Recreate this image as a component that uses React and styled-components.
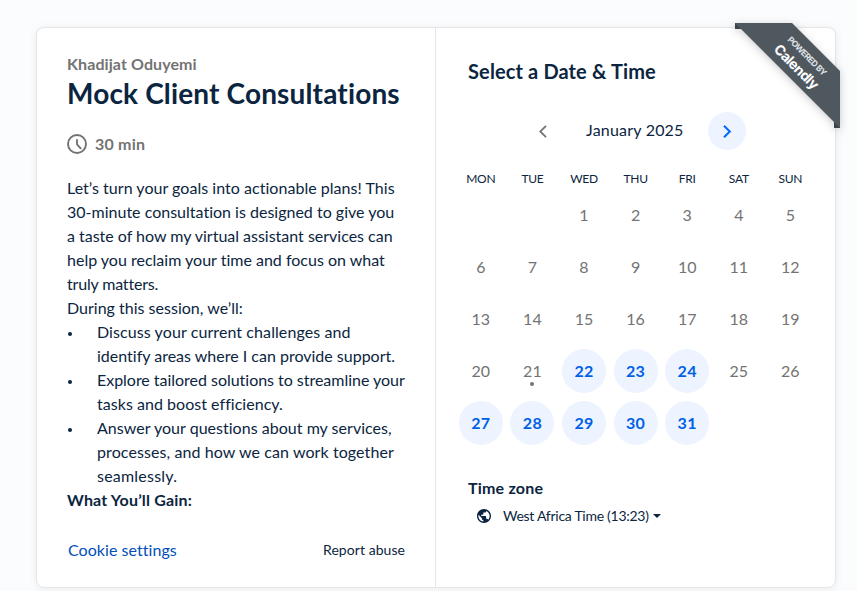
import React from 'react';
import styled, { createGlobalStyle } from 'styled-components';

const GlobalStyle = createGlobalStyle`
  *, *::before, *::after { box-sizing: border-box; }
  body {
    margin: 0;
    height: 591px;
    overflow: hidden;
    background: #fbfcfe;
    color: #0b2540;
    font-family: Lato, "Liberation Sans", sans-serif;
    font-size: 16px;
    line-height: 24px;
    font-variant-ligatures: none;
  }
  h1, h2, h3, p, ul { margin: 0; padding: 0; }
  button { font: inherit; color: inherit; border: 0; padding: 0; background: none; }
`;

const Page = styled.main`
  padding: 27px 21px 0 36px;
  height: 591px;
`;

const Card = styled.section`
  position: relative;
  display: grid;
  grid-template-columns: 399px 1fr;
  height: 561px;
  background: #fff;
  border: 1px solid #e4e6e8;
  border-radius: 8px;
  box-shadow: 0 1px 8px rgba(0, 0, 0, 0.07);
`;

const Details = styled.div`
  display: flex;
  flex-direction: column;
  padding: 24px 30px 25px;
  border-right: 1px solid #e4e6e8;
`;

const Host = styled.h3`
  font-size: 16px;
  line-height: 24px;
  font-weight: 700;
  letter-spacing: 0.09px;
  color: #737373;
`;

const Title = styled.h1`
  margin-top: -1px;
  font-size: 28px;
  line-height: 36px;
  font-weight: 700;
  letter-spacing: 0.15px;
  white-space: nowrap;
`;

const Duration = styled.div`
  display: flex;
  align-items: center;
  gap: 8px;
  margin-top: 21px;
  height: 24px;
  font-weight: 700;
  letter-spacing: 0.2px;
  color: #737373;
`;

const Description = styled.div`
  margin-top: 20px;
  flex: 1;
`;

const Line = styled.span`
  display: block;
  white-space: nowrap;
  letter-spacing: ${(p) => p.$track || 0}px;
`;

const Bullets = styled.ul`
  list-style: none;
`;

const Bullet = styled.li`
  display: grid;
  grid-template-columns: 30px 1fr;
  &::before {
    content: "";
    width: 4px;
    height: 4px;
    margin: 12px 0 0 1px;
    border-radius: 50%;
    background: #0b2540;
  }
`;

const Gain = styled.p`
  font-weight: 700;
  letter-spacing: 0.18px;
`;

const FooterLinks = styled.div`
  display: flex;
  justify-content: space-between;
  align-items: center;
  padding-left: 1px;
  height: 24px;
`;

const CookieLink = styled.button`
  color: #004eba;
  letter-spacing: 0.05px;
`;

const ReportLink = styled.button`
  font-size: 14px;
  letter-spacing: 0.06px;
`;

const Scheduler = styled.div`
  display: flex;
  flex-direction: column;
  padding: 29px 19px 0;
`;

const Heading = styled.h2`
  padding-left: 13px;
  font-size: 20px;
  line-height: 28px;
  font-weight: 700;
  letter-spacing: 0.13px;
`;

const MonthNav = styled.div`
  display: grid;
  grid-template-columns: 38px 98px 38px;
  column-gap: 24px;
  align-items: center;
  justify-content: center;
  height: 38px;
  margin: 27px 1px 0 0;
`;

const Month = styled.div`
  padding-bottom: 2px;
  white-space: nowrap;
  letter-spacing: 0.2px;
`;

const NavButton = styled.button`
  display: grid;
  place-items: center;
  width: 38px;
  height: 38px;
  border-radius: 50%;
  color: ${(p) => (p.$active ? '#0069ff' : '#737373')};
  background: ${(p) => (p.$active ? '#edf4ff' : 'transparent')};
`;

const Weekdays = styled.div`
  display: grid;
  grid-template-columns: repeat(7, 51.6px);
  margin-top: 20px;
  height: 18px;
  font-size: 12px;
  line-height: 18px;
  text-align: center;
  letter-spacing: -0.3px;
`;

const Days = styled.div`
  display: grid;
  grid-template-columns: repeat(7, 51.6px);
  grid-auto-rows: 52px;
  margin-top: 1px;
  place-items: center;
`;

const Day = styled.div`
  position: relative;
  display: grid;
  place-items: center;
  width: 44px;
  height: 44px;
  border-radius: 50%;
  grid-column-start: ${(p) => p.$column || 'auto'};
  color: ${(p) => (p.$open ? '#0060e6' : '#737373')};
  background: ${(p) => (p.$open ? '#edf4ff' : 'transparent')};
  font-weight: ${(p) => (p.$open ? 700 : 400)};
  letter-spacing: ${(p) => (p.$open ? 0.3 : 0)}px;
`;

const TodayDot = styled.span`
  position: absolute;
  left: 20px;
  bottom: 7px;
  width: 4px;
  height: 4px;
  border-radius: 50%;
  background: #737373;
`;

const ZoneTitle = styled.h3`
  margin-top: 27px;
  padding-left: 13px;
  font-size: 16px;
  line-height: 24px;
  letter-spacing: 0.2px;
`;

const Zone = styled.button`
  display: flex;
  align-items: center;
  height: 24px;
  margin-top: 4px;
  padding-left: 21px;
  font-size: 14px;
  white-space: nowrap;
`;

const ZoneName = styled.span`
  margin: 0 4px 0 11px;
  letter-spacing: -0.27px;
`;

const Ribbon = styled.a`
  position: absolute;
  top: -5px;
  right: -5px;
  width: 105px;
  height: 105px;
  color: #fff;
`;

const RibbonShape = styled.svg`
  display: block;
  overflow: visible;
  filter: drop-shadow(0 2px 4px rgba(0, 0, 0, 0.2));
`;

const RibbonLabel = styled.span`
  position: absolute;
  top: 38.5px;
  left: 66px;
  display: flex;
  flex-direction: column;
  align-items: center;
  transform: translate(-50%, -50%) rotate(45deg);
  white-space: nowrap;
  font-family: Inter, sans-serif;
`;

const PoweredBy = styled.small`
  font-size: 8.5px;
  line-height: 12px;
  font-weight: 700;
  color: #dfe1e3;
  letter-spacing: -0.6px;
`;

const Brand = styled.strong`
  font-size: 14px;
  line-height: 17px;
  font-weight: 700;
  letter-spacing: -0.55px;
`;

const DAYS = Array.from({ length: 31 }, (_, i) => i + 1);
const OPEN = new Set([22, 23, 24, 27, 28, 29, 30, 31]);

const TASKS = [
  [['Discuss your current challenges and', 0.09], ['identify areas where I can provide support.', 0]],
  [['Explore tailored solutions to streamline your', -0.025], ['tasks and boost efficiency.', 0.034]],
  [
    ['Answer your questions about my services,', 0.025],
    ['processes, and how we can work together', 0.09],
    ['seamlessly.', 0.22],
  ],
];

const INTRO = [
  ['Let’s turn your goals into actionable plans! This', 0.035],
  ['30-minute consultation is designed to give you', 0.005],
  ['a taste of how my virtual assistant services can', -0.01],
  ['help you reclaim your time and focus on what', 0.005],
  ['truly matters.', -0.17],
  ['During this session, we’ll:', 0.01],
];

const renderLines = (lines) => lines.map(([text, track]) => <Line key={text} $track={track}>{text} </Line>);

const Clock = () => (
  <svg width="20" height="20" viewBox="0 0 20 20" fill="none" stroke="currentColor" strokeWidth="1.9" strokeLinecap="round" strokeLinejoin="round">
    <circle cx="10" cy="10" r="9" />
    <path d="M10 6v4.3l3.6 4" />
  </svg>
);

const Chevron = ({ left }) => (
  <svg width="8" height="13" viewBox="0 0 8 13" fill="none" stroke="currentColor" strokeWidth={left ? 1.8 : 2}>
    <path d={left ? 'M7 .8 1.2 6.5 7 12.2' : 'M1 .8 6.8 6.5 1 12.2'} />
  </svg>
);

const Globe = () => (
  <svg width="16" height="16" viewBox="0 0 24 24" fill="currentColor">
    <path d="M12 1.5C6.2 1.5 1.5 6.2 1.5 12S6.2 22.5 12 22.5 22.5 17.8 22.5 12 17.8 1.5 12 1.5zM11 20.300C6.800 19.800 3.600 16.300 3.600 12c0-.7.1-1.300.2-1.900L8.900 15.200v1.100c0 1.100.9 2.100 2.100 2.100zm7.200-2.600c-.3-.8-1-1.400-2-1.400h-1v-3.200c0-.6-.5-1-1-1H7.900V10H10c.6 0 1-.5 1-1V6.900h2.100c1.200 0 2.100-1 2.100-2.100v-.4c3.100 1.200 5.300 4.200 5.300 7.600 0 2.200-.9 4.200-2.300 5.700z" />
  </svg>
);

export default function App() {
  return (
    <>
      <GlobalStyle />
      <Page>
        <Card>
          <Details>
            <Host>Khadijat Oduyemi</Host>
            <Title>Mock Client Consultations</Title>
            <Duration><Clock />30 min</Duration>
            <Description>
              {renderLines(INTRO)}
              <Bullets>
                {TASKS.map((lines) => (
                  <Bullet key={lines[0][0]}><div>{renderLines(lines)}</div></Bullet>
                ))}
              </Bullets>
              <Gain>What You’ll Gain:</Gain>
            </Description>
            <FooterLinks>
              <CookieLink>Cookie settings</CookieLink>
              <ReportLink>Report abuse</ReportLink>
            </FooterLinks>
          </Details>
          <Scheduler>
            <Heading>Select a Date &amp; Time</Heading>
            <MonthNav>
              <NavButton aria-label="Previous month"><Chevron left /></NavButton>
              <Month>January 2025</Month>
              <NavButton $active aria-label="Next month"><Chevron /></NavButton>
            </MonthNav>
            <Weekdays>
              {['MON', 'TUE', 'WED', 'THU', 'FRI', 'SAT', 'SUN'].map((d) => <span key={d}>{d}</span>)}
            </Weekdays>
            <Days>
              {DAYS.map((d) => (
                <Day key={d} $open={OPEN.has(d)} $column={d === 1 ? 3 : undefined}>
                  {d}
                  {d === 21 && <TodayDot />}
                </Day>
              ))}
            </Days>
            <ZoneTitle>Time zone</ZoneTitle>
            <Zone>
              <Globe />
              <ZoneName>West Africa Time (13:23)</ZoneName>
              <svg width="8" height="4" viewBox="0 0 8 4" fill="currentColor"><path d="M0 0h8L4 4z" /></svg>
            </Zone>
          </Scheduler>
          <Ribbon>
            <RibbonShape width="105" height="105" viewBox="0 0 105 105">
              <path d="M0 0h6v6H0zM99 99h6v6h-6z" fill="#3d444b" />
              <path d="M0 0h57l48 48v57z" fill="#50585f" />
            </RibbonShape>
            <RibbonLabel>
              <PoweredBy>POWERED BY</PoweredBy>
              <Brand>Calendly</Brand>
            </RibbonLabel>
          </Ribbon>
        </Card>
      </Page>
    </>
  );
}
